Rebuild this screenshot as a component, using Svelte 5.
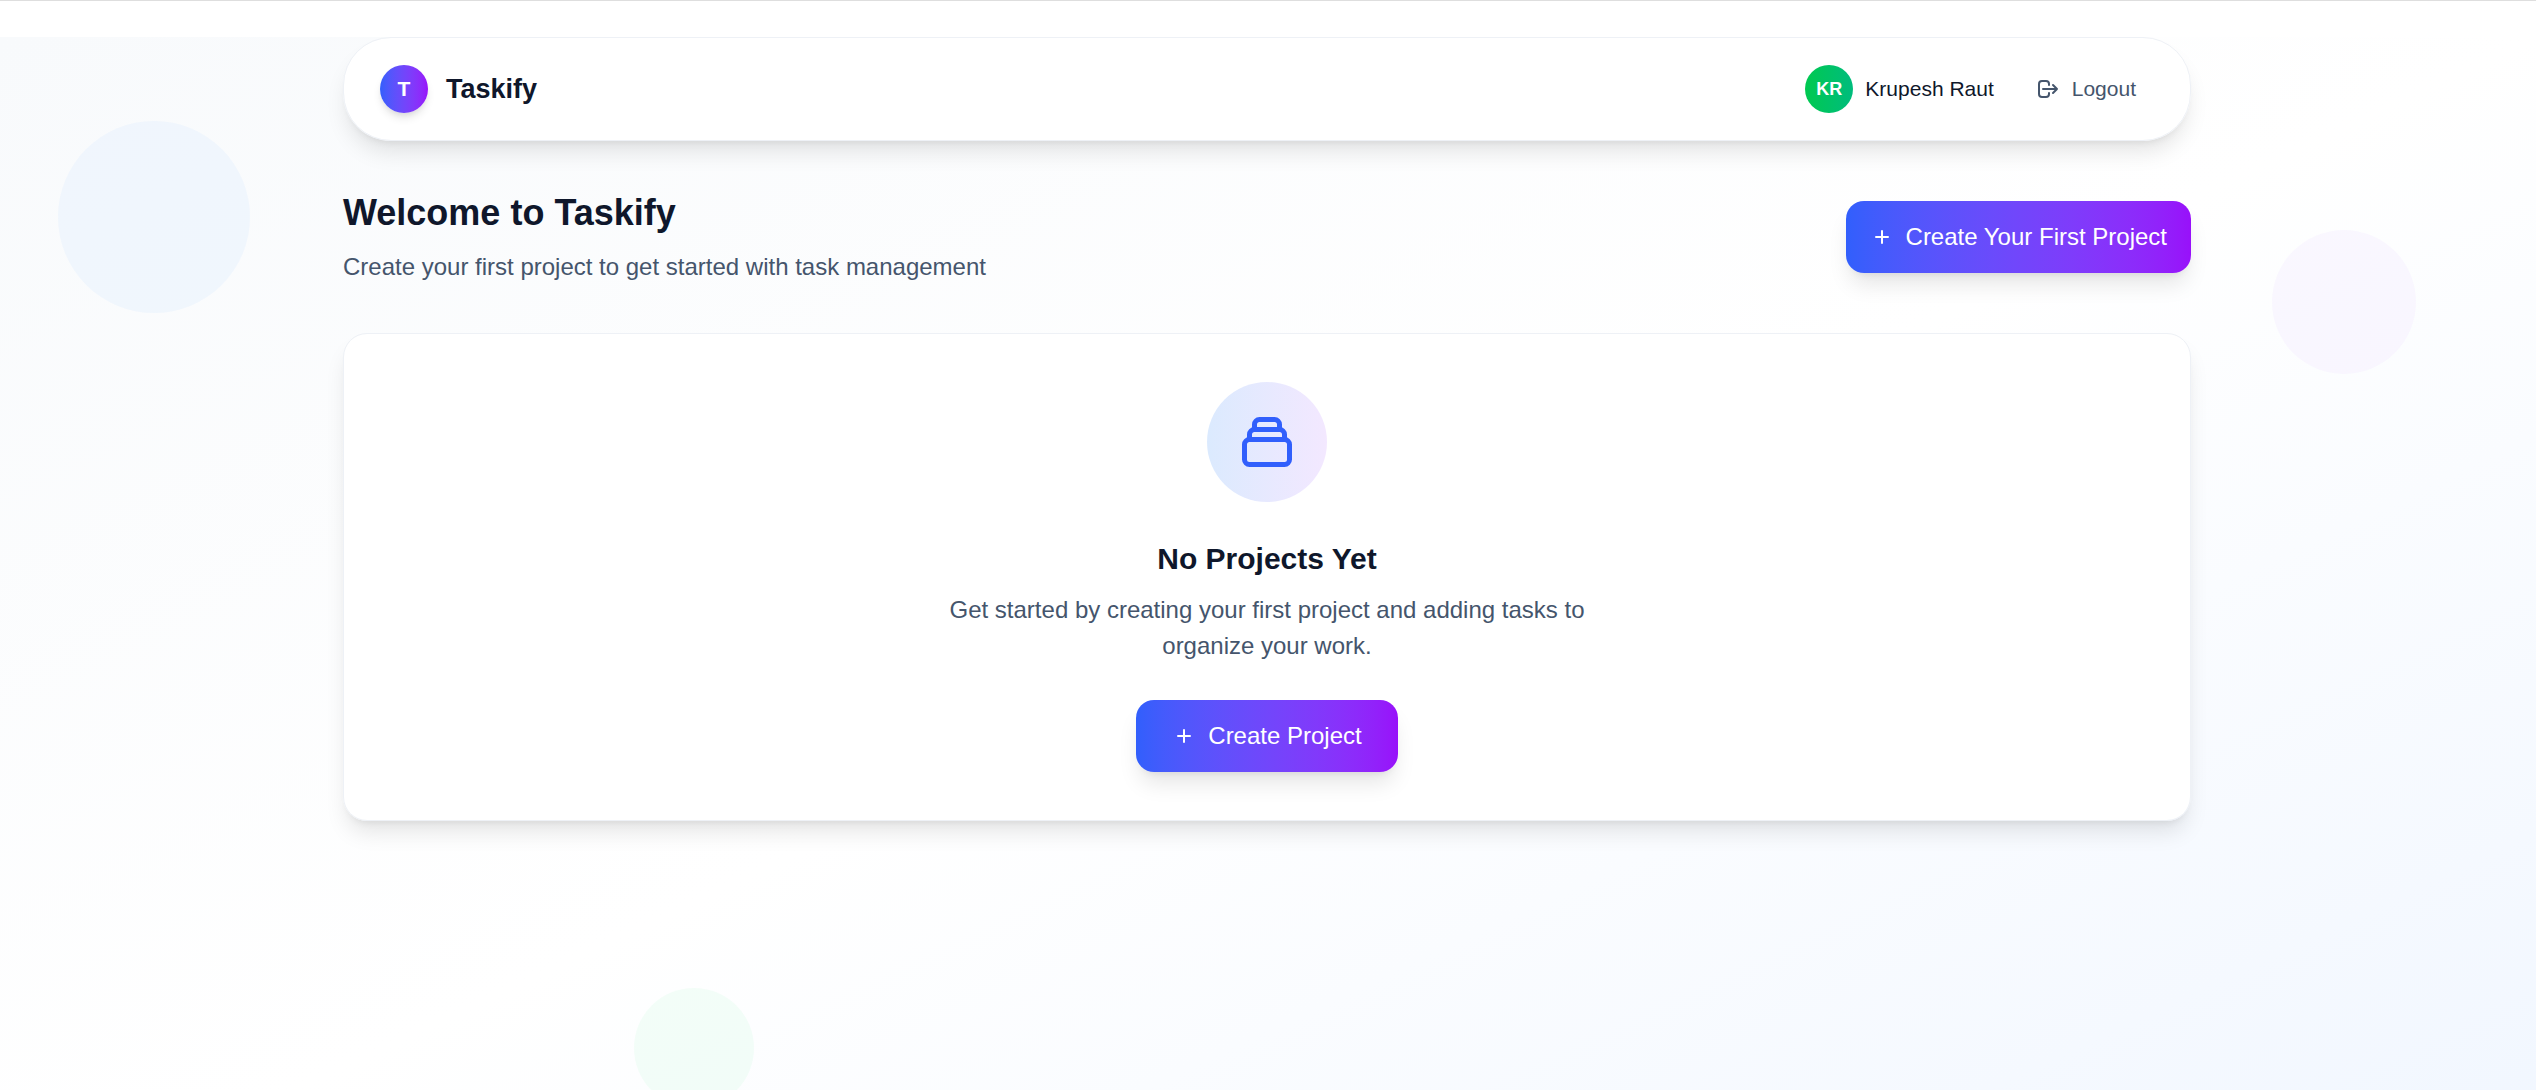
<script>
  const user = { name: 'Krupesh Raut', initials: 'KR' };
  let projects = $state([]);

  function createProject() {
    projects = [];
  }
</script>

{#snippet plus()}
  <svg class="icon" viewBox="0 0 24 24" aria-hidden="true">
    <path d="M12 6v12M6 12h12" />
  </svg>
{/snippet}

<div class="shell">
  <div class="page">
    <div class="bubble blue"></div>
    <div class="bubble purple"></div>
    <div class="bubble green"></div>

    <div class="container">
      <header class="navbar">
        <div class="brand">
          <span class="logo">T</span>
          <span class="brand-name">Taskify</span>
        </div>
        <div class="account">
          <div class="user">
            <span class="avatar">{user.initials}</span>
            <span>{user.name}</span>
          </div>
          <button type="button" class="logout">
            <svg class="icon" viewBox="0 0 24 24" aria-hidden="true">
              <path d="M17 16l4-4m0 0l-4-4m4 4H7m6 4v1a3 3 0 01-3 3H6a3 3 0 01-3-3V7a3 3 0 013-3h4a3 3 0 013 3v1" />
            </svg>
            Logout
          </button>
        </div>
      </header>

      <main>
        <section class="hero">
          <div>
            <h1>Welcome to Taskify</h1>
            <p>Create your first project to get started with task management</p>
          </div>
          <button type="button" class="primary" onclick={createProject}>
            {@render plus()}
            Create Your First Project
          </button>
        </section>

        {#if projects.length === 0}
          <section class="card">
            <div class="badge">
              <svg viewBox="0 0 24 24" aria-hidden="true">
                <path d="M19 11H5m14 0a2 2 0 012 2v6a2 2 0 01-2 2H5a2 2 0 01-2-2v-6a2 2 0 012-2m14 0V9a2 2 0 00-2-2M5 11V9a2 2 0 012-2m0 0V5a2 2 0 012-2h6a2 2 0 012 2v2M7 7h10" />
              </svg>
            </div>
            <h2>No Projects Yet</h2>
            <p>Get started by creating your first project and adding tasks to organize your work.</p>
            <button type="button" class="primary wide" onclick={createProject}>
              {@render plus()}
              Create Project
            </button>
          </section>
        {/if}
      </main>
    </div>
  </div>
</div>

<style>
  :global(body) {
    background: #ffffff;
  }

  .shell {
    box-sizing: border-box;
    height: 100vh;
    overflow: hidden;
    border-top: 1px solid #dedede;
    padding-top: 36px;
    font-family: 'Liberation Sans', Arial, sans-serif;
    font-size: 24px;
    line-height: 36px;
    color: #0f172b;
  }

  .page {
    position: relative;
    min-height: calc(100vh + 101px);
    background: linear-gradient(to bottom right, #f8fafc, #ffffff, #f0f6ff);
  }

  .bubble {
    position: absolute;
    border-radius: 50%;
  }

  .blue {
    top: 84px;
    left: 58px;
    width: 192px;
    height: 192px;
    background: rgba(219, 234, 254, 0.3);
  }

  .purple {
    top: 193px;
    right: 120px;
    width: 144px;
    height: 144px;
    background: rgba(243, 232, 255, 0.3);
  }

  .green {
    bottom: 120px;
    left: 25%;
    width: 120px;
    height: 120px;
    background: rgba(220, 252, 231, 0.3);
  }

  .container {
    position: relative;
    box-sizing: border-box;
    max-width: 1920px;
    margin: 0 auto;
    padding: 0 37px 0 35px;
  }

  .navbar {
    display: flex;
    align-items: center;
    justify-content: space-between;
    padding: 24px 36px;
    border: 1px solid #eef1f6;
    border-radius: 48px;
    background: rgba(255, 255, 255, 0.9);
    background-clip: padding-box;
    box-shadow: 0 15px 22px -4px rgba(0, 0, 0, 0.1), 0 6px 9px -6px rgba(0, 0, 0, 0.1);
  }

  .brand,
  .account,
  .user,
  .logout,
  .primary {
    display: flex;
    align-items: center;
  }

  .brand {
    gap: 18px;
  }

  .logo,
  .avatar {
    display: grid;
    place-items: center;
    width: 48px;
    height: 48px;
    border-radius: 50%;
    color: #ffffff;
    font-weight: 700;
  }

  .logo {
    background: linear-gradient(to right in oklab, #315ffc, #9810fa);
    box-shadow: 0 6px 9px -1px rgba(0, 0, 0, 0.1), 0 3px 6px -3px rgba(0, 0, 0, 0.1);
    font-size: 21px;
  }

  .brand-name {
    font-size: 27px;
    font-weight: 700;
  }

  .account {
    gap: 24px;
    font-size: 21px;
  }

  .user {
    gap: 12px;
  }

  .avatar {
    background: linear-gradient(to right, #00c950, #00bc7d);
    font-size: 18px;
  }

  button {
    border: 0;
    font-family: inherit;
    line-height: inherit;
    cursor: pointer;
  }

  .logout {
    gap: 12px;
    padding: 9px 18px;
    border-radius: 12px;
    background: transparent;
    color: #45556c;
    font-size: 21px;
  }

  .icon {
    flex: none;
    width: 24px;
    height: 24px;
  }

  svg {
    fill: none;
    stroke: currentColor;
    stroke-width: 2;
    stroke-linecap: round;
    stroke-linejoin: round;
  }

  main {
    display: grid;
    gap: 48px;
    padding-top: 48px;
  }

  .hero {
    display: flex;
    align-items: center;
    justify-content: space-between;
    gap: 24px;
  }

  h1,
  h2,
  p {
    margin: 0;
  }

  h1 {
    margin-bottom: 12px;
    font-size: 36px;
    line-height: 48px;
  }

  p {
    color: #45556c;
  }

  .primary {
    gap: 12px;
    padding: 18px 24px;
    border-radius: 18px;
    background: linear-gradient(to right in oklab, #315ffc, #9810fa);
    box-shadow: 0 15px 22px -4px rgba(0, 0, 0, 0.1), 0 6px 9px -6px rgba(0, 0, 0, 0.1);
    color: #ffffff;
    font-size: 24px;
    white-space: nowrap;
  }

  .wide {
    padding: 18px 36px;
  }

  .card {
    display: flex;
    flex-direction: column;
    align-items: center;
    padding: 48px;
    border: 1px solid #eef1f6;
    border-radius: 24px;
    background: rgba(255, 255, 255, 0.9);
    background-clip: padding-box;
    box-shadow: 0 15px 22px -4px rgba(0, 0, 0, 0.1), 0 6px 9px -6px rgba(0, 0, 0, 0.1);
    text-align: center;
  }

  .badge {
    display: grid;
    place-items: center;
    width: 120px;
    height: 120px;
    margin-bottom: 36px;
    border-radius: 50%;
    background: linear-gradient(to right, #dbeafe, #f3e8ff);
    color: #315ffc;
  }

  .badge svg {
    width: 60px;
    height: 60px;
  }

  h2 {
    margin-bottom: 12px;
    font-size: 30px;
    line-height: 42px;
  }

  .card p {
    max-width: 672px;
    margin-bottom: 36px;
  }
</style>
